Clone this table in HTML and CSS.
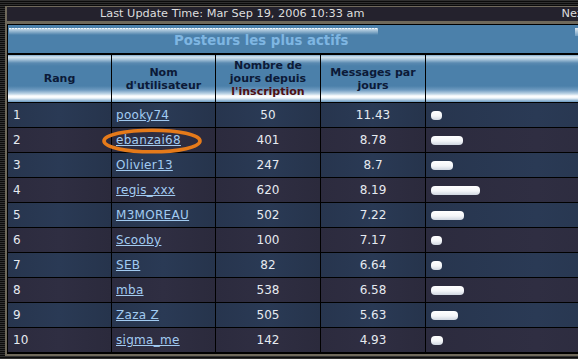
FILE: index.html
```html
<!DOCTYPE html>
<html>
<head>
<meta charset="utf-8">
<title>Posteurs les plus actifs</title>
<link rel="stylesheet" href="styles.css">
</head>
<body>
<div class="frame">
  <div class="topbar"><span class="upd">Last Update Time: Mar Sep 19, 2006 10:33 am</span><span class="next">Next</span></div>
  <table class="stats">
    <colgroup><col class="c1"><col class="c2"><col class="c3"><col class="c4"><col class="c5"></colgroup>
    <tr><th colspan="5" class="cat">Posteurs les plus actifs</th></tr>
    <tr class="head">
      <th>Rang</th>
      <th>Nom<br>d'utilisateur</th>
      <th>Nombre de<br>jours depuis<br><span class="red">l'inscription</span></th>
      <th>Messages par<br>jours</th>
      <th></th>
    </tr>
    <tr class="odd"><td class="rk">1</td><td class="nm"><a href="#">pooky74</a></td><td class="num">50</td><td class="num">11.43</td><td class="br"><span class="bar" style="width:11px"></span></td></tr>
    <tr class="even"><td class="rk">2</td><td class="nm ring-cell"><a href="#">ebanzai68</a><svg class="ring" width="100" height="26" viewBox="0 0 100 26"><ellipse cx="50" cy="13" rx="48" ry="10.8" fill="none" stroke="#e57a1a" stroke-width="3.6"/></svg></td><td class="num">401</td><td class="num">8.78</td><td class="br"><span class="bar" style="width:32px"></span></td></tr>
    <tr class="odd"><td class="rk">3</td><td class="nm"><a href="#">Olivier13</a></td><td class="num">247</td><td class="num">8.7</td><td class="br"><span class="bar" style="width:22px"></span></td></tr>
    <tr class="even"><td class="rk">4</td><td class="nm"><a href="#">regis_xxx</a></td><td class="num">620</td><td class="num">8.19</td><td class="br"><span class="bar" style="width:49px"></span></td></tr>
    <tr class="odd"><td class="rk">5</td><td class="nm"><a href="#">M3MOREAU</a></td><td class="num">502</td><td class="num">7.22</td><td class="br"><span class="bar" style="width:33px"></span></td></tr>
    <tr class="even"><td class="rk">6</td><td class="nm"><a href="#">Scooby</a></td><td class="num">100</td><td class="num">7.17</td><td class="br"><span class="bar" style="width:11px"></span></td></tr>
    <tr class="odd"><td class="rk">7</td><td class="nm"><a href="#">SEB</a></td><td class="num">82</td><td class="num">6.64</td><td class="br"><span class="bar" style="width:11px"></span></td></tr>
    <tr class="even"><td class="rk">8</td><td class="nm"><a href="#">mba</a></td><td class="num">538</td><td class="num">6.58</td><td class="br"><span class="bar" style="width:33px"></span></td></tr>
    <tr class="odd"><td class="rk">9</td><td class="nm"><a href="#">Zaza Z</a></td><td class="num">505</td><td class="num">5.63</td><td class="br"><span class="bar" style="width:27px"></span></td></tr>
    <tr class="even"><td class="rk">10</td><td class="nm"><a href="#">sigma_me</a></td><td class="num">142</td><td class="num">4.93</td><td class="br"><span class="bar" style="width:12px"></span></td></tr>
  </table>
</div>
</body>
</html>
```

FILE: styles.css
```css
html, body {
  margin: 0;
  padding: 0;
  overflow: hidden;
}

body {
  height: 359px;
  background: repeating-linear-gradient(180deg, #303030 0 1px, #0b0b0b 1px 2px);
  font-family: "DejaVu Sans", Verdana, sans-serif;
}

.frame {
  margin: 6px 0 0 5px;
  width: 640px;
  border-top: 1px solid #6f695b;
  border-left: 2px solid #6f695b;
  border-bottom: 2px solid #6f695b;
  background: #6f695b;
}

.topbar {
  height: 14px;
  background: #24222d;
  color: #dedede;
  font-size: 11.3px;
  line-height: 14px;
  display: flex;
  padding-left: 93px;
  margin-bottom: 3px;
  white-space: nowrap;
}

.next {
  margin-left: 197px;
}

.stats {
  border-collapse: separate;
  border-spacing: 0;
  table-layout: fixed;
  width: 100%;
  border-top: 1px solid #000;
  border-left: 1px solid #000;
  border-bottom: 1px solid #000;
}

.c1 { width: 104px; }
.c2 { width: 104px; }
.c3 { width: 105px; }
.c4 { width: 105px; }

.stats th,
.stats td {
  box-sizing: border-box;
  padding: 0;
  border-right: 1px solid #000;
  border-bottom: 1px solid #000;
}

.stats th.cat {
  height: 30px;
  border-right: none;
  border-bottom: 2px solid #000;
  text-align: left;
  padding: 3px 0 0 166px;
  font-size: 13.3px;
  font-weight: bold;
  color: #7fb6e2;
  background:
    repeating-linear-gradient(90deg, #f4f8fb 0 2px, #a9c6dc 2px 3px) 1px 3px / 369px 1px no-repeat,
    linear-gradient(#c4d9e8, #4b80aa) 1px 4px / 369px 6px no-repeat,
    linear-gradient(#dde9f2, #6f9cc0) 567px 3px / 4px 8px no-repeat,
    #4b80aa;
}

.head th {
  height: 48px;
  font-size: 11px;
  line-height: 13px;
  font-weight: bold;
  color: #0c1a38;
  text-align: center;
  vertical-align: middle;
  background: linear-gradient(180deg,
    #7ea6c6 0px, #d6e5f0 2px, #b2cce0 4px, #5a8ab1 8px, #4b80aa 11px,
    #4b80aa 31px, #6e9ac0 35px, #c2d8e8 39px, #ffffff 41px, #f2f7fb 43px,
    #a6c4dc 45px, #6a98bf 47px);
}

.head th:last-child {
  border-right: none;
}

.red {
  color: #4e0f12;
}

.stats td {
  height: 25px;
  font-size: 12px;
  color: #e6eaf0;
  vertical-align: middle;
}

.stats td.br {
  border-right: none;
  padding-left: 5px;
}

.odd td {
  background: linear-gradient(90deg, #27354e, #2a3a55 50%, #26344c);
}

.even td {
  background: linear-gradient(90deg, #2c2b3e, #2f2e42 50%, #2b2a3c);
}

.rk {
  padding-left: 5px !important;
}

.nm {
  padding-left: 4px !important;
}

.num {
  text-align: center;
}

.nm a {
  color: #a2cbf1;
  text-decoration: underline;
  letter-spacing: 0.3px;
}

.ring-cell {
  position: relative;
}

.ring {
  position: absolute;
  left: -10px;
  top: 0;
  display: block;
}

.bar {
  display: block;
  height: 9px;
  border-radius: 4px;
  background: linear-gradient(180deg, #ffffff, #f4f6f9 55%, #cfd6e0);
}
```
